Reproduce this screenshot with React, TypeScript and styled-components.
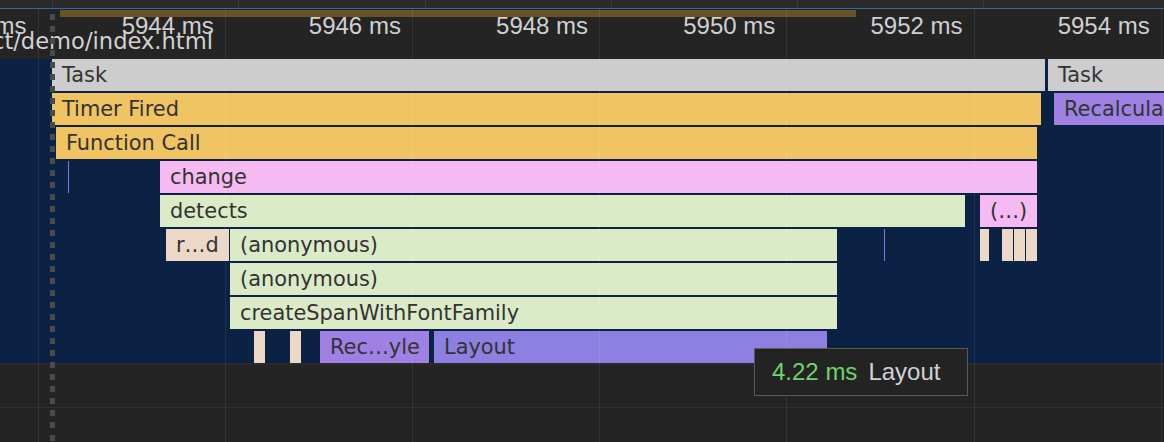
import React from "react";
import styled, { createGlobalStyle } from "styled-components";

const GlobalStyle = createGlobalStyle`
  html, body { margin: 0; padding: 0; background: #242424; overflow: hidden; }
  #root { width: 1164px; height: 442px; }
`;

type Tone = "task" | "yellow" | "pink" | "green" | "beige" | "purple" | "layout" | "tick";

const TONES: Record<Tone, string> = {
  task: "#cdcdcd",
  yellow: "#f0c462",
  pink: "#f6baf2",
  green: "#dbebc8",
  beige: "#ecd8c6",
  purple: "#9e81e2",
  layout: "#8e80e0",
  tick: "#8a6fe0",
};

type BarData = { x0: number; x1: number; tone: Tone; label?: string };

const ROWS: BarData[][] = [
  [
    { x0: 52, x1: 1045, tone: "task", label: "Task" },
    { x0: 1048, x1: 1220, tone: "task", label: "Task" },
  ],
  [
    { x0: 52, x1: 1041, tone: "yellow", label: "Timer Fired" },
    { x0: 1054, x1: 1220, tone: "purple", label: "Recalculate Style" },
  ],
  [{ x0: 56, x1: 1037, tone: "yellow", label: "Function Call" }],
  [
    { x0: 68, x1: 69, tone: "tick" },
    { x0: 160, x1: 1037, tone: "pink", label: "change" },
  ],
  [
    { x0: 160, x1: 965, tone: "green", label: "detects" },
    { x0: 980, x1: 1037, tone: "pink", label: "(…)" },
  ],
  [
    { x0: 166, x1: 229, tone: "beige", label: "r…d" },
    { x0: 230, x1: 837, tone: "green", label: "(anonymous)" },
    { x0: 884, x1: 885, tone: "tick" },
    { x0: 980, x1: 989, tone: "beige" },
    { x0: 1002, x1: 1013, tone: "beige" },
    { x0: 1014, x1: 1025, tone: "beige" },
    { x0: 1026, x1: 1037, tone: "beige" },
  ],
  [{ x0: 230, x1: 837, tone: "green", label: "(anonymous)" }],
  [{ x0: 230, x1: 837, tone: "green", label: "createSpanWithFontFamily" }],
  [
    { x0: 254, x1: 265, tone: "beige" },
    { x0: 290, x1: 301, tone: "beige" },
    { x0: 320, x1: 429, tone: "purple", label: "Rec…yle" },
    { x0: 434, x1: 827, tone: "layout", label: "Layout" },
  ],
];

const GRID = [37.5, 224.7, 411.9, 599.1, 786.3, 973.5, 1160.7];
const TICKS = ["5942 ms", "5944 ms", "5946 ms", "5948 ms", "5950 ms", "5952 ms", "5954 ms"];
const OVERVIEW_LINES = [52, 238, 425, 611, 797, 983];

const Root = styled.div`
  position: relative;
  width: 1164px;
  height: 442px;
  overflow: hidden;
  display: flex;
  flex-direction: column;
  background: #242424;
`;

const OverviewStrip = styled.div`
  position: relative;
  height: 8px;
  background: #2a2a2a;
  flex: none;
`;

const OverviewLine = styled.div`
  position: absolute;
  top: 0;
  bottom: 0;
  width: 1px;
  background: #3a3a3a;
`;

const BlueRule = styled.div`
  height: 1px;
  background: #2c6ea6;
  flex: none;
`;

const Header = styled.div`
  position: relative;
  height: 50px;
  flex: none;
  background: #242424;
`;

const RangeBar = styled.div`
  position: absolute;
  top: 1px;
  left: 60px;
  width: 796px;
  height: 7px;
  background: #6a5227;
`;

const TickLabel = styled.div`
  position: absolute;
  top: 5px;
  transform: translateX(-100%);
  font-family: "Liberation Sans", Arial, sans-serif;
  font-size: 24px;
  line-height: 24px;
  color: #d0d0d0;
  white-space: nowrap;
`;

const UrlLabel = styled.div`
  position: absolute;
  top: 19px;
  right: calc(100% - 213px);
  font-family: "DejaVu Sans", sans-serif;
  font-size: 22.6px;
  line-height: 26px;
  color: #d2d2d2;
  white-space: nowrap;
`;

const FlameArea = styled.div`
  height: 304px;
  flex: none;
  background: #0b2245;
  display: flex;
  flex-direction: column;
  gap: 2px;
`;

const Row = styled.div`
  position: relative;
  height: 32px;
  flex: none;
`;

const Bar = styled.div<{ $tone: Tone }>`
  position: absolute;
  top: 0;
  height: 32px;
  box-sizing: border-box;
  padding-left: 10px;
  background: ${(p) => TONES[p.$tone]};
  overflow: hidden;
  white-space: nowrap;
  font-family: "DejaVu Sans", sans-serif;
  font-size: 20.9px;
  line-height: 32px;
  color: #333333;
`;

const BottomPane = styled.div`
  flex: 1;
  border-top: 2px solid #2b2b2b;
  display: flex;
  flex-direction: column;
`;

const BottomTrack = styled.div`
  height: 42px;
  border-bottom: 1px solid #303030;
  flex: none;
`;

const GridLine = styled.div`
  position: absolute;
  top: 9px;
  bottom: 0;
  width: 1px;
  background: rgba(255, 255, 255, 0.075);
  pointer-events: none;
`;

const DottedRule = styled.div`
  position: absolute;
  top: 9px;
  bottom: 0;
  left: 50px;
  width: 5px;
  background: repeating-linear-gradient(
    to bottom,
    transparent 0px,
    transparent 2px,
    #4a4a4a 2px,
    #4a4a4a 8px,
    transparent 8px,
    transparent 12px
  );
  background-position: 0 -9px;
  pointer-events: none;
`;

const Tooltip = styled.div`
  position: absolute;
  left: 754px;
  top: 348px;
  width: 214px;
  height: 48px;
  box-sizing: border-box;
  border: 1px solid #585858;
  background: #232323;
  padding-left: 17px;
  display: flex;
  align-items: center;
  gap: 11px;
  font-family: "Liberation Sans", Arial, sans-serif;
  font-size: 24px;
  line-height: 46px;
  white-space: nowrap;
`;

const Duration = styled.span`
  color: #6fd46c;
`;

const TipName = styled.span`
  color: #cfd2d8;
`;

export default function App() {
  return (
    <>
      <GlobalStyle />
      <Root>
        <OverviewStrip>
          {OVERVIEW_LINES.map((x) => (
            <OverviewLine key={x} style={{ left: x }} />
          ))}
        </OverviewStrip>
        <BlueRule />
        <Header>
          <RangeBar />
          {TICKS.map((t, i) => (
            <TickLabel key={t} style={{ left: GRID[i] - 11 }}>
              {t}
            </TickLabel>
          ))}
          <UrlLabel>file:///react/demo/index.html</UrlLabel>
        </Header>
        <FlameArea>
          {ROWS.map((row, ri) => (
            <Row key={ri}>
              {row.map((b, bi) => (
                <Bar
                  key={bi}
                  $tone={b.tone}
                  style={{
                    left: b.x0,
                    width: b.x1 - b.x0,
                    paddingLeft: b.label ? undefined : 0,
                  }}
                >
                  {b.label}
                </Bar>
              ))}
            </Row>
          ))}
        </FlameArea>
        <BottomPane>
          <BottomTrack />
        </BottomPane>
        {GRID.map((x) => (
          <GridLine key={x} style={{ left: Math.round(x) }} />
        ))}
        <DottedRule />
        <Tooltip>
          <Duration>4.22 ms</Duration>
          <TipName>Layout</TipName>
        </Tooltip>
      </Root>
    </>
  );
}
